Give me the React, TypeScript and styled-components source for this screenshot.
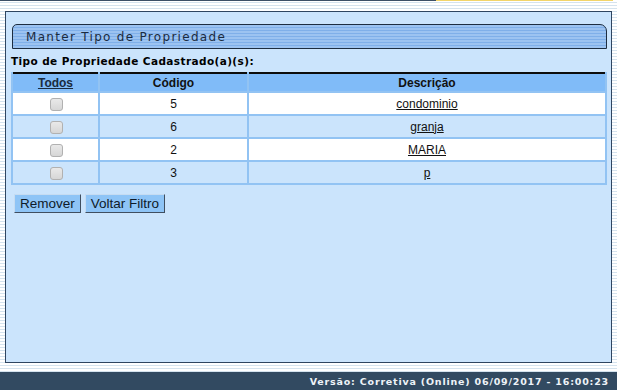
import React from "react";
import styled, { createGlobalStyle } from "styled-components";

const Global = createGlobalStyle`
  html, body { margin: 0; padding: 0; }
  *, *::before, *::after { box-sizing: border-box; }
  body { font-family: "Liberation Sans", Arial, sans-serif; }
`;

const Page = styled.div`
  width: 617px;
  height: 392px;
  overflow: hidden;
  display: flex;
  flex-direction: column;
  background: repeating-linear-gradient(
    to bottom,
    #ffffff 0px,
    #ffffff 2px,
    #d5e3ee 2px,
    #d5e3ee 3px
  );
`;

const TopLine = styled.div`
  display: flex;
  height: 1px;
  flex: none;
`;

const TopSeg = styled.div<{ $w: number; $c: string }>`
  width: ${(p) => p.$w}px;
  background: ${(p) => p.$c};
`;

const Panel = styled.div`
  flex: none;
  margin: 10px 5px 0 5px;
  height: 352px;
  border: 1px solid #2f4560;
  background: #cbe4fc;
  padding: 12px 4px 0 5px;
  display: flex;
  flex-direction: column;
`;

const TitleBar = styled.div`
  margin-left: 1px;
  height: 25px;
  flex: none;
  border: 1px solid #1d2d40;
  border-radius: 5px 7px 0 0;
  background: repeating-linear-gradient(
    to bottom,
    #9cc3f1 0px,
    #9cc3f1 2px,
    #7fafe9 2px,
    #7fafe9 3px
  );
  display: flex;
  align-items: center;
  padding-left: 13px;
  font-family: "DejaVu Sans", Verdana, sans-serif;
  font-size: 12px;
  letter-spacing: 1.3px;
  color: #1b2b40;
`;

const Label = styled.div`
  margin-top: 6px;
  font-family: "DejaVu Sans", Verdana, sans-serif;
  font-weight: bold;
  font-size: 10.5px;
  letter-spacing: 0.4px;
  color: #000;
  height: 17px;
  line-height: 12px;
`;

const Table = styled.table`
  border-collapse: collapse;
  width: 596px;
  border-top: 2px solid #0c0c0c;
  font-family: "Liberation Sans", Arial, sans-serif;
  font-size: 12px;
`;

const Th = styled.th<{ $w?: number }>`
  width: ${(p) => (p.$w ? `${p.$w}px` : "auto")};
  background: #80bbf8;
  height: 19px;
  padding: 0;
  font-weight: bold;
  color: #111;
  text-align: center;
  border-left: 2px solid #92c3f3;
  border-right: 2px solid #92c3f3;
`;

const HeaderLink = styled.span`
  text-decoration: underline;
  color: #1a2a3e;
`;

const Tr = styled.tr<{ $alt: boolean }>`
  background: ${(p) => (p.$alt ? "#cbe4fc" : "#ffffff")};
`;

const Td = styled.td`
  height: 23px;
  padding: 0;
  text-align: center;
  border: 2px solid #92c3f3;
  color: #111;
`;

const Check = styled.input`
  appearance: none;
  display: inline-block;
  vertical-align: middle;
  margin: 0 0 0 2px;
  width: 13px;
  height: 13px;
  border: 1px solid #b1b1b1;
  border-radius: 3px;
  background: linear-gradient(#e9e9e9, #d6d6d6);
`;

const DescLink = styled.a`
  color: #111;
  text-decoration: underline;
`;

const Buttons = styled.div`
  display: flex;
  gap: 4px;
  margin: 9px 0 0 3px;
`;

const Button = styled.button`
  height: 19px;
  padding: 0 5px;
  background: #8ec4f6;
  border: 1px solid #3f4e60;
  border-top-color: #c6dcf2;
  border-left-color: #c6dcf2;
  font-family: "Liberation Sans", Arial, sans-serif;
  font-size: 13.5px;
  color: #0e1a28;
  line-height: 16px;
`;

const Footer = styled.div`
  flex: none;
  margin-top: 9px;
  height: 18px;
  background: #324a61;
  color: #eef3f8;
  display: flex;
  align-items: center;
  justify-content: flex-end;
  padding-right: 8px;
  font-family: "DejaVu Sans", Verdana, sans-serif;
  font-weight: bold;
  font-size: 9.5px;
  letter-spacing: 0.8px;
`;

const rows = [
  { code: "5", desc: "condominio" },
  { code: "6", desc: "granja" },
  { code: "2", desc: "MARIA" },
  { code: "3", desc: "p" },
];

export default function App() {
  return (
    <>
      <Global />
      <Page>
        <TopLine>
          <TopSeg $w={436} $c="#3c4f66" />
          <TopSeg $w={177} $c="#f2d46a" />
        </TopLine>
        <Panel>
          <TitleBar>Manter Tipo de Propriedade</TitleBar>
          <Label>Tipo de Propriedade Cadastrado(a)(s):</Label>
          <Table>
            <thead>
              <tr>
                <Th $w={87}>
                  <HeaderLink>Todos</HeaderLink>
                </Th>
                <Th $w={149}>Código</Th>
                <Th>Descrição</Th>
              </tr>
            </thead>
            <tbody>
              {rows.map((r, i) => (
                <Tr key={r.code} $alt={i % 2 === 1}>
                  <Td>
                    <Check type="checkbox" />
                  </Td>
                  <Td>{r.code}</Td>
                  <Td>
                    <DescLink href="#">{r.desc}</DescLink>
                  </Td>
                </Tr>
              ))}
            </tbody>
          </Table>
          <Buttons>
            <Button>Remover</Button>
            <Button>Voltar Filtro</Button>
          </Buttons>
        </Panel>
        <Footer>Versão: Corretiva (Online) 06/09/2017 - 16:00:23</Footer>
      </Page>
    </>
  );
}
